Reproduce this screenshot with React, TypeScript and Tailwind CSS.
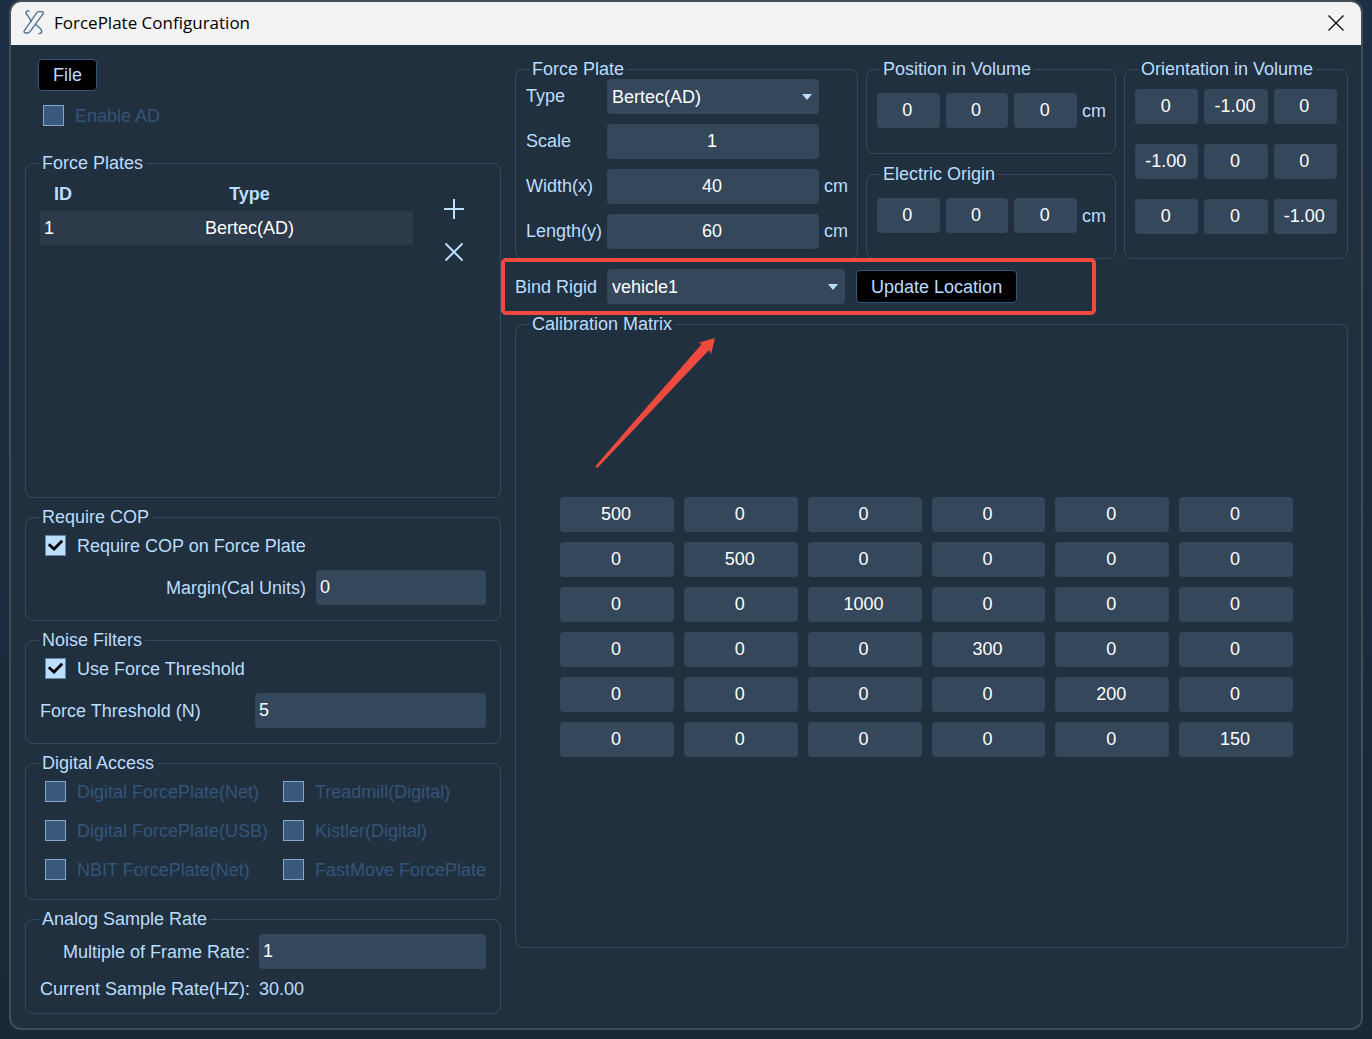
import { useState } from 'react';
import type { ReactNode } from 'react';

interface GroupProps {
  title: string;
  className?: string;
  children: ReactNode;
}

interface CheckProps {
  label: string;
  disabled?: boolean;
  defaultChecked?: boolean;
}

interface NumberFieldProps {
  id?: string;
  label?: string;
  value: string;
}

const orientation = [
  ['0', '-1.00', '0'],
  ['-1.00', '0', '0'],
  ['0', '0', '-1.00'],
];

const calibration = [500, 500, 1000, 300, 200, 150];

const digitalSources = [
  'Digital ForcePlate(Net)',
  'Treadmill(Digital)',
  'Digital ForcePlate(USB)',
  'Kistler(Digital)',
  'NBIT ForcePlate(Net)',
  'FastMove ForcePlate',
];

const fieldClass = 'h-[35px] w-full min-w-0 rounded-[4px] bg-[#35475b] text-white outline-none';

function Group({ title, className = '', children }: GroupProps) {
  return (
    <fieldset className={`min-w-0 rounded-lg border border-[#384c61] ${className}`}>
      <legend className="ml-[13px] px-[3px] leading-5">{title}</legend>
      {children}
    </fieldset>
  );
}

function Check({ label, disabled, defaultChecked }: CheckProps) {
  return (
    <label className={`flex items-center gap-[11px] leading-5 whitespace-nowrap ${disabled ? 'text-[#34557a]' : ''}`}>
      <span className="relative size-[21px] shrink-0">
        <input
          type="checkbox"
          disabled={disabled}
          defaultChecked={defaultChecked}
          className="peer block size-[21px] appearance-none border border-[#84a6cd] bg-[#3a5a7d] checked:border-[#6a85a3] checked:bg-[#bbddff]"
        />
        <svg viewBox="0 0 21 21" className="pointer-events-none absolute inset-0 hidden peer-checked:block" fill="none" stroke="#000" strokeWidth="2.8">
          <path d="M3.8 9.3 L9 14 L17.2 5.8" />
        </svg>
      </span>
      {label}
    </label>
  );
}

function NumberField({ id, label, value }: NumberFieldProps) {
  return <input id={id} aria-label={label} defaultValue={value} className={`${fieldClass} pr-[2px] text-center`} />;
}

function SelectField({ id, options }: { id: string; options: string[] }) {
  return (
    <div className="relative">
      <select id={id} className={`${fieldClass} appearance-none pr-7 pl-[5px]`}>
        {options.map((option) => (
          <option key={option}>{option}</option>
        ))}
      </select>
      <svg viewBox="0 0 10 6" className="pointer-events-none absolute top-[15px] right-[7px] h-[6px] w-[10px]" fill="#bbddff">
        <path d="M0 0 H10 L5 6 Z" />
      </svg>
    </div>
  );
}

function VectorGroup({ title }: { title: string }) {
  return (
    <Group title={title} className="h-[95px]">
      <div className="flex items-center gap-[5px] pt-[14px] pr-[9px] pl-[10px]">
        <div className="grid flex-1 grid-cols-3 gap-[6px]">
          {['x', 'y', 'z'].map((axis) => (
            <NumberField key={axis} label={`${title} ${axis}`} value="0" />
          ))}
        </div>
        <span>cm</span>
      </div>
    </Group>
  );
}

function TitleBar() {
  return (
    <header className="flex h-[43px] items-center justify-between bg-[#f3f3f3] pr-[17px] pb-[2px] pl-3 text-black">
      <div className="flex items-center gap-[9px]">
        <svg viewBox="70 29 66 78" className="h-[26px] w-[22px]" fill="none" stroke="#4d7196" strokeWidth="4" strokeLinecap="round">
          <path d="M117 34 H127 Q133 34 130 41 L91 94 Q88 98 83 98 H77 Q71 97 74 91 L111 38 Q113 34 117 34 Z" />
          <path d="M88 32 Q78 31 79 38 Q80 43 85 47 L95 63" />
          <path d="M109 73 L121 84 Q127 89 126 95 Q125 100 118 100" />
        </svg>
        <h1 className="font-['Open_Sans',sans-serif] text-[17px] leading-6">ForcePlate Configuration</h1>
      </div>
      <button type="button" aria-label="Close" className="p-0">
        <svg viewBox="0 0 16 16" className="size-4" stroke="#111" strokeWidth="1.4">
          <path d="M0.5 0.5 L15.5 15.5 M15.5 0.5 L0.5 15.5" />
        </svg>
      </button>
    </header>
  );
}

function PlateList() {
  return (
    <Group title="Force Plates" className="mt-[27px] flex-1">
      <div className="flex items-start gap-[9px] px-[14px] pt-[3px]">
        <table className="flex-1 table-fixed border-collapse">
          <colgroup>
            <col className="w-[46px]" />
            <col />
          </colgroup>
          <thead>
            <tr className="h-[35px]">
              <th className="p-0 text-center">ID</th>
              <th className="p-0 text-center">Type</th>
            </tr>
          </thead>
          <tbody>
            <tr className="h-[34px] bg-[#2d3a4a] text-white">
              <td className="p-0 pl-1">1</td>
              <td className="p-0 text-center">Bertec(AD)</td>
            </tr>
          </tbody>
        </table>
        <div className="flex w-16 flex-col pt-[11px]">
          <button type="button" aria-label="Add force plate" className="flex h-[43px] items-center justify-center">
            <svg viewBox="0 0 20 20" className="size-5" stroke="#bbddff" strokeWidth="2">
              <path d="M10 0 V20 M0 10 H20" />
            </svg>
          </button>
          <button type="button" aria-label="Remove force plate" className="flex h-[43px] items-center justify-center">
            <svg viewBox="0 0 20 20" className="size-5" stroke="#bbddff" strokeWidth="2">
              <path d="M1.5 1.5 L18.5 18.5 M18.5 1.5 L1.5 18.5" />
            </svg>
          </button>
        </div>
      </div>
    </Group>
  );
}

function Sidebar() {
  const [threshold, setThreshold] = useState('5');

  return (
    <div className="flex flex-col">
      <div className="ml-[13px]">
        <button type="button" className="block h-8 rounded-[4px] border border-[#35557b] bg-black px-[14px]">
          File
        </button>
        <div className="mt-[14px] ml-[5px]">
          <Check label="Enable AD" disabled />
        </div>
      </div>

      <PlateList />

      <Group title="Require COP" className="mt-[9px]">
        <div className="px-[14px] pt-2 pb-[15px]">
          <div className="ml-[5px]">
            <Check label="Require COP on Force Plate" defaultChecked />
          </div>
          <div className="mt-[14px] flex items-center justify-end gap-[10px]">
            <label htmlFor="margin">Margin(Cal Units)</label>
            <div className="w-[170px]">
              <input id="margin" defaultValue="0" className={`${fieldClass} pl-1`} />
            </div>
          </div>
        </div>
      </Group>

      <Group title="Noise Filters" className="mt-[9px]">
        <div className="px-[14px] pt-2 pb-[15px]">
          <div className="ml-[5px]">
            <Check label="Use Force Threshold" defaultChecked />
          </div>
          <div className="mt-[14px] flex items-center justify-between">
            <label htmlFor="threshold">Force Threshold (N)</label>
            <div className="w-[231px]">
              <input
                id="threshold"
                value={threshold}
                onChange={(e) => setThreshold(e.target.value)}
                className={`${fieldClass} pl-1`}
              />
            </div>
          </div>
        </div>
      </Group>

      <Group title="Digital Access" className="mt-[9px]">
        <div className="grid grid-cols-[auto_auto] justify-between gap-y-[18px] pt-2 pr-[14px] pb-[19px] pl-[19px]">
          {digitalSources.map((source) => (
            <Check key={source} label={source} disabled />
          ))}
        </div>
      </Group>

      <Group title="Analog Sample Rate" className="mt-[9px]">
        <div className="grid grid-cols-[auto_1fr] items-center gap-x-[9px] gap-y-[10px] px-[14px] pt-[5px] pb-[14px] leading-5">
          <label htmlFor="multiple" className="text-right">
            Multiple of Frame Rate:
          </label>
          <input id="multiple" defaultValue="1" className={`${fieldClass} pl-1`} />
          <span className="text-right">Current Sample Rate(HZ):</span>
          <output>30.00</output>
        </div>
      </Group>
    </div>
  );
}

function PlateSettings() {
  return (
    <Group title="Force Plate">
      <div className="grid grid-cols-[auto_1fr_auto] items-center gap-x-[5px] gap-y-[10px] pr-[9px] pb-[9px] pl-[10px]">
        <label htmlFor="plate-type" className="pb-[2px]">Type</label>
        <SelectField id="plate-type" options={['Bertec(AD)']} />
        <span />
        <label htmlFor="plate-scale" className="pb-[2px]">Scale</label>
        <NumberField id="plate-scale" value="1" />
        <span />
        <label htmlFor="plate-width" className="pb-[2px]">Width(x)</label>
        <NumberField id="plate-width" value="40" />
        <span className="pb-[2px]">cm</span>
        <label htmlFor="plate-length" className="pb-[2px]">Length(y)</label>
        <NumberField id="plate-length" value="60" />
        <span className="pb-[2px]">cm</span>
      </div>
    </Group>
  );
}

function BindRow() {
  return (
    <div className="relative mt-[10px] flex items-center">
      <label htmlFor="rigid" className="mr-[10px]">
        Bind Rigid
      </label>
      <div className="mr-[11px] w-[238px]">
        <SelectField id="rigid" options={['vehicle1']} />
      </div>
      <button type="button" className="h-[33px] rounded-[4px] border border-[#35557b] bg-black px-[14px]">
        Update Location
      </button>
      <div className="pointer-events-none absolute -inset-y-[11px] -left-[14px] z-10 w-[595px] rounded-[5px] border-4 border-[#f04a3e]" />
    </div>
  );
}

function CalibrationMatrix() {
  return (
    <Group title="Calibration Matrix" className="relative mt-[10px] flex-1">
      <div className="grid grid-cols-6 gap-[10px] pt-[163px] pr-[54px] pl-[44px]">
        {calibration.map((gain, row) =>
          calibration.map((_, col) => (
            <NumberField key={`${row}-${col}`} label={`Row ${row + 1} column ${col + 1}`} value={row === col ? String(gain) : '0'} />
          ))
        )}
      </div>
      <svg viewBox="105 85 360 390" className="pointer-events-none absolute top-1 left-[79px] h-[130px] w-[120px]" fill="#f04a3e">
        <path d="M106 470 L426 102 L414 100 L465 85 L453 134 L447 121 L112 475 Z" />
      </svg>
    </Group>
  );
}

export default function App() {
  return (
    <div className="flex min-h-screen flex-col bg-linear-to-b from-[#1c2f45] to-[#1a2736] px-[9px] pb-[9px] font-['Liberation_Sans',Arial,sans-serif] text-[18px] leading-5 text-[#bbddff]">
      <main className="flex flex-1 flex-col overflow-hidden rounded-xl border-2 border-[#434d57] bg-[#21303e]">
        <TitleBar />
        <div className="grid flex-1 grid-cols-[4fr_7fr] gap-[14px] pt-[14px] pr-[13px] pb-[14px] pl-[14px]">
          <Sidebar />
          <div className="flex flex-col pb-[66px]">
            <div className="grid grid-cols-[343fr_250fr_224fr] gap-2">
              <PlateSettings />
              <div className="flex flex-col gap-[10px]">
                <VectorGroup title="Position in Volume" />
                <VectorGroup title="Electric Origin" />
              </div>
              <Group title="Orientation in Volume">
                <div className="grid grid-cols-3 gap-x-[6px] gap-y-[20px] px-[10px] pt-[10px]">
                  {orientation.map((row, r) =>
                    row.map((value, c) => (
                      <NumberField key={`${r}-${c}`} label={`Orientation ${r + 1},${c + 1}`} value={value} />
                    ))
                  )}
                </div>
              </Group>
            </div>
            <BindRow />
            <CalibrationMatrix />
          </div>
        </div>
      </main>
    </div>
  );
}
